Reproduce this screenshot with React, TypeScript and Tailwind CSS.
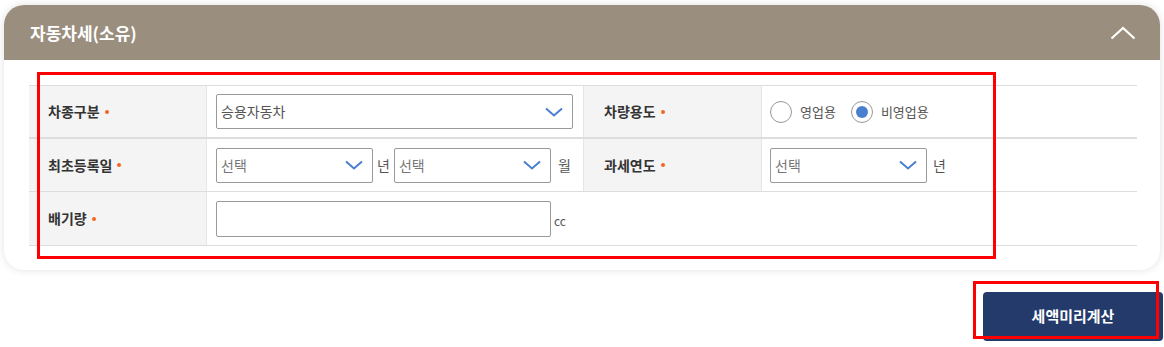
import React from "react";

const FONT = { fontFamily: '"Noto Sans CJK KR", "Noto Sans", sans-serif' };

function Chevron() {
  return (
    <svg width="18" height="10" viewBox="0 0 18 10" className="shrink-0">
      <path d="M1 1.5 L9 8.5 L17 1.5" fill="none" stroke="#4a7fd0" strokeWidth="2" />
    </svg>
  );
}

function Select({ value, w, placeholder }: { value: string; w: string; placeholder?: boolean }) {
  return (
    <div
      className={`${w} h-[35px] border border-[#999] rounded-[2px] bg-white flex items-center justify-between pl-[4px] pr-[9px]`}
    >
      <span className={`text-[14px] ${placeholder ? "text-[#777]" : "text-[#555]"}`}>{value}</span>
      <Chevron />
    </div>
  );
}

function Dot() {
  return <span className="ml-[5px] w-[4px] h-[4px] rounded-full bg-[#f26522]" />;
}

function Label({ text }: { text: string }) {
  return (
    <div className="bg-[#f4f4f4] flex items-center pl-[19px] text-[14px] font-semibold text-[#333]">
      {text}
      <Dot />
    </div>
  );
}

function Radio({ checked, label }: { checked?: boolean; label: string }) {
  return (
    <div className="flex items-center">
      <span className="w-[22px] h-[22px] rounded-full border border-[#999] bg-white flex items-center justify-center">
        {checked && <span className="w-[12px] h-[12px] rounded-full bg-[#4a7fd0]" />}
      </span>
      <span className="ml-[8px] text-[13px] text-[#555]">{label}</span>
    </div>
  );
}

export default function App() {
  return (
    <div className="relative w-[1164px] h-[347px] bg-white overflow-hidden" style={FONT}>
      <div className="ml-[4px] mt-[5px] w-[1156px] rounded-[20px] bg-white shadow-[0_0_8px_rgba(0,0,0,0.12)] overflow-hidden">
        <div className="h-[55px] bg-[#9a8f7e] flex items-center justify-between pl-[26px] pr-[24px]">
          <span className="text-white text-[17px] font-bold">자동차세(소유)</span>
          <svg width="26" height="14" viewBox="0 0 26 14">
            <path d="M1.5 12.5 L13 2 L24.5 12.5" fill="none" stroke="#fff" strokeWidth="2.2" />
          </svg>
        </div>
        <div className="pt-[25px] pb-[24px] pl-[25px] pr-[23px]">
          <div className="border-t border-[#ddd]">
            <div className="grid grid-cols-[177px_377px_178px_376px] h-[53px] border-b-2 border-[#ddd]">
              <Label text="차종구분" />
              <div className="flex items-center pl-[9px] pr-[10px] border-l border-[#e5e5e5]">
                <Select value="승용자동차" w="w-full" />
              </div>
              <div className="border-l border-[#e5e5e5] bg-[#f4f4f4] flex items-center pl-[20px] text-[14px] font-semibold text-[#333]">
                차량용도
                <Dot />
              </div>
              <div className="flex items-center pl-[8px] gap-[15px] border-l border-[#e5e5e5]">
                <Radio label="영업용" />
                <Radio checked label="비영업용" />
              </div>
            </div>
            <div className="grid grid-cols-[177px_377px_178px_376px] h-[53px] border-b border-[#ddd]">
              <Label text="최초등록일" />
              <div className="flex items-center pl-[9px] border-l border-[#e5e5e5]">
                <Select value="선택" w="w-[157px]" placeholder />
                <span className="mx-[4px] text-[14px] text-[#555]">년</span>
                <Select value="선택" w="w-[157px]" placeholder />
                <span className="ml-[7px] text-[14px] text-[#555]">월</span>
              </div>
              <div className="border-l border-[#e5e5e5] bg-[#f4f4f4] flex items-center pl-[20px] text-[14px] font-semibold text-[#333]">
                과세연도
                <Dot />
              </div>
              <div className="flex items-center pl-[8px] border-l border-[#e5e5e5]">
                <Select value="선택" w="w-[157px]" placeholder />
                <span className="ml-[6px] text-[14px] text-[#555]">년</span>
              </div>
            </div>
            <div className="grid grid-cols-[177px_931px] h-[54px] border-b border-[#ddd]">
              <Label text="배기량" />
              <div className="flex items-center pl-[9px] border-l border-[#e5e5e5]">
                <div className="w-[335px] h-[36px] border border-[#999] rounded-[2px] bg-white" />
                <span className="ml-[3px] mt-[4px] text-[12px] text-[#555]">cc</span>
              </div>
            </div>
          </div>
        </div>
      </div>
      <div className="flex justify-end mt-[22px] pr-[1px]">
        <button className="w-[180px] h-[49px] rounded-[4px] bg-[#243a6b] text-white text-[15px] font-bold">
          세액미리계산
        </button>
      </div>
      <div className="absolute left-[37px] top-[72px] w-[959px] h-[187px] border-[3px] border-[#ff0000]" />
      <div className="absolute left-[973px] top-[281px] w-[186px] h-[58px] border-[3px] border-[#ff0000]" />
    </div>
  );
}
